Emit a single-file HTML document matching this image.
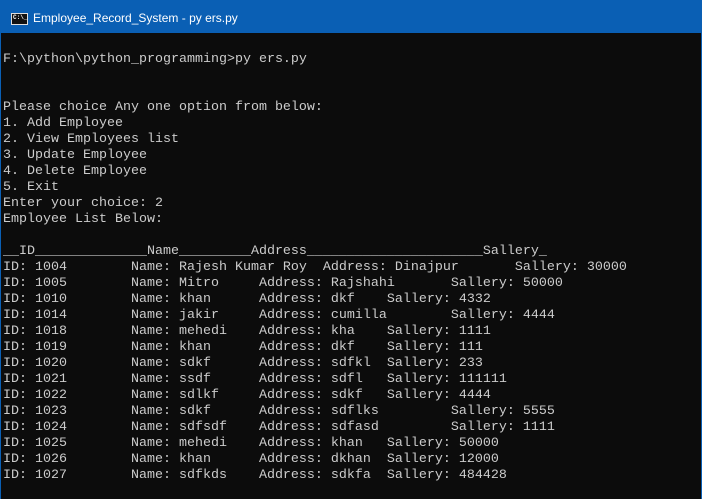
<!DOCTYPE html>
<html><head><style>
body{margin:0;width:702px;height:499px;background:#0c0c0c;overflow:hidden;position:relative}
.tb{position:absolute;left:0;top:0;width:702px;height:33px;background:#0a5fb4;}
.tb span{position:absolute;left:33px;top:11px;color:#fff;font:12px "Liberation Sans","DejaVu Sans",sans-serif}
.ic{position:absolute;left:11px;top:13px;width:15px;height:10px;background:#111;border:1px solid #ddd;}
.ic i{position:absolute;left:1px;top:0;color:#fff;font:bold 6px "Liberation Mono",monospace;font-style:normal}
.bl{position:absolute;left:0;top:33px;width:1px;height:466px;background:#0a5fb4}
.br{position:absolute;right:0;top:33px;width:1px;height:466px;background:#0a5fb4}
pre{position:absolute;left:3px;top:52px;margin:0;color:#cccccc;font:13.33px/16px "Liberation Mono",monospace}
</style></head><body>
<div class="tb"><div class="ic"><i>C:\_</i></div><span>Employee_Record_System - py  ers.py</span></div>
<div class="bl"></div><div class="br"></div>
<pre>F:\python\python_programming&gt;py ers.py


Please choice Any one option from below:
1. Add Employee
2. View Employees list
3. Update Employee
4. Delete Employee
5. Exit
Enter your choice: 2
Employee List Below:

__ID______________Name_________Address______________________Sallery_
ID: 1004        Name: Rajesh Kumar Roy  Address: Dinajpur       Sallery: 30000
ID: 1005        Name: Mitro     Address: Rajshahi       Sallery: 50000
ID: 1010        Name: khan      Address: dkf    Sallery: 4332
ID: 1014        Name: jakir     Address: cumilla        Sallery: 4444
ID: 1018        Name: mehedi    Address: kha    Sallery: 1111
ID: 1019        Name: khan      Address: dkf    Sallery: 111
ID: 1020        Name: sdkf      Address: sdfkl  Sallery: 233
ID: 1021        Name: ssdf      Address: sdfl   Sallery: 111111
ID: 1022        Name: sdlkf     Address: sdkf   Sallery: 4444
ID: 1023        Name: sdkf      Address: sdflks         Sallery: 5555
ID: 1024        Name: sdfsdf    Address: sdfasd         Sallery: 1111
ID: 1025        Name: mehedi    Address: khan   Sallery: 50000
ID: 1026        Name: khan      Address: dkhan  Sallery: 12000
ID: 1027        Name: sdfkds    Address: sdkfa  Sallery: 484428</pre>
</body></html>
